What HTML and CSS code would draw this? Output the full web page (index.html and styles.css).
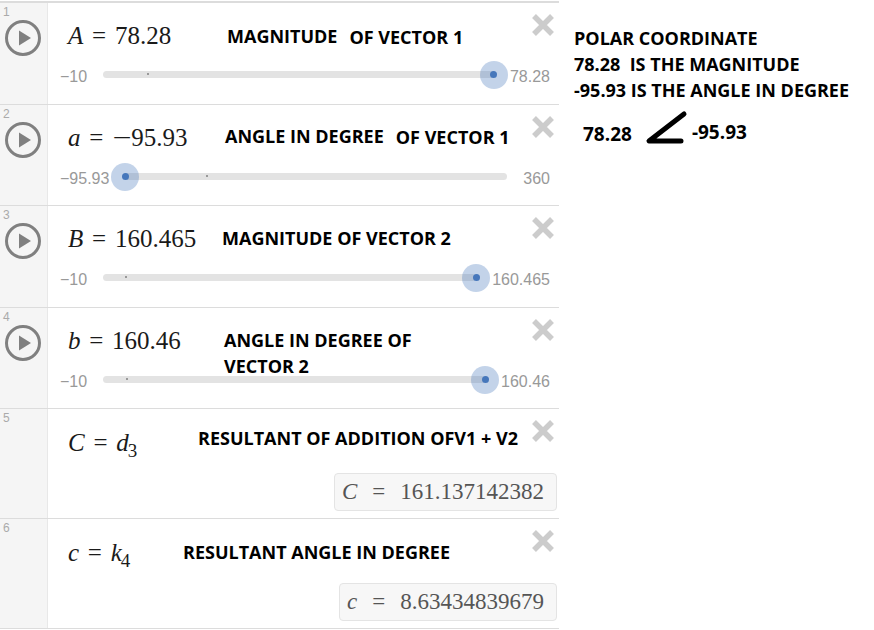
FILE: index.html
```html
<!DOCTYPE html>
<html lang="en">
<head>
  <meta charset="UTF-8">
  <title>Polar coordinates</title>
  <link rel="stylesheet" href="styles.css">
</head>
<body>
  <div class="lista">
    <div class="fila alta1">
      <div class="margen">
        <span class="num">1</span>
        <svg class="play" width="36" height="36" viewBox="0 0 36 36"><circle cx="18" cy="18" r="16.5"/><path d="M14 10.500 L26 18 L14 25.500 Z"/></svg>
      </div>
      <div class="cuerpo">
        <div class="cabeza">
          <div class="mate"><i>A</i> = 78.28</div>
          <div class="nota nota1"><span>MAGNITUDE</span><span class="baja">OF VECTOR 1</span></div>
        </div>
        <div class="slider">
          <span>−10</span>
          <div class="pista"><b class="marca" style="left: 11.3%"></b><b class="thumb fin"></b></div>
          <span>78.28</span>
        </div>
      </div>
      <span class="cerrar"><svg width="24" height="24" viewBox="0 0 24 24"><path d="M3 3 L21 21 M21 3 L3 21"/></svg></span>
    </div>

    <div class="fila alta2">
      <div class="margen">
        <span class="num">2</span>
        <svg class="play" width="36" height="36" viewBox="0 0 36 36"><circle cx="18" cy="18" r="16.5"/><path d="M14 10.500 L26 18 L14 25.500 Z"/></svg>
      </div>
      <div class="cuerpo">
        <div class="cabeza">
          <div class="mate"><i>a</i> = <span class="menos">−</span>95.93</div>
          <div class="nota nota2"><span>ANGLE IN DEGREE</span><span class="baja">OF VECTOR 1</span></div>
        </div>
        <div class="slider">
          <span>−95.93</span>
          <div class="pista"><b class="marca" style="left: 21%"></b><b class="thumb"></b></div>
          <span>360</span>
        </div>
      </div>
      <span class="cerrar"><svg width="24" height="24" viewBox="0 0 24 24"><path d="M3 3 L21 21 M21 3 L3 21"/></svg></span>
    </div>

    <div class="fila alta1">
      <div class="margen">
        <span class="num">3</span>
        <svg class="play" width="36" height="36" viewBox="0 0 36 36"><circle cx="18" cy="18" r="16.5"/><path d="M14 10.500 L26 18 L14 25.500 Z"/></svg>
      </div>
      <div class="cuerpo">
        <div class="cabeza">
          <div class="mate"><i>B</i> = 160.465</div>
          <div class="nota nota3">MAGNITUDE OF VECTOR 2</div>
        </div>
        <div class="slider">
          <span>−10</span>
          <div class="pista"><b class="marca" style="left: 5.9%"></b><b class="thumb fin"></b></div>
          <span>160.465</span>
        </div>
      </div>
      <span class="cerrar"><svg width="24" height="24" viewBox="0 0 24 24"><path d="M3 3 L21 21 M21 3 L3 21"/></svg></span>
    </div>

    <div class="fila alta2">
      <div class="margen">
        <span class="num">4</span>
        <svg class="play" width="36" height="36" viewBox="0 0 36 36"><circle cx="18" cy="18" r="16.5"/><path d="M14 10.500 L26 18 L14 25.500 Z"/></svg>
      </div>
      <div class="cuerpo">
        <div class="cabeza">
          <div class="mate"><i>b</i> = 160.46</div>
          <div class="nota nota4">ANGLE IN DEGREE OF<br>VECTOR 2</div>
        </div>
        <div class="slider">
          <span>−10</span>
          <div class="pista"><b class="marca" style="left: 5.9%"></b><b class="thumb fin"></b></div>
          <span>160.46</span>
        </div>
      </div>
      <span class="cerrar"><svg width="24" height="24" viewBox="0 0 24 24"><path d="M3 3 L21 21 M21 3 L3 21"/></svg></span>
    </div>

    <div class="fila alta3">
      <div class="margen">
        <span class="num">5</span>
      </div>
      <div class="cuerpo">
        <div class="cabeza">
          <div class="mate"><i>C</i> = <i>d</i><sub>3</sub></div>
          <div class="nota nota5">RESULTANT OF ADDITION OFV1 + V2</div>
        </div>
        <div class="salida"><i>C</i><span>=</span><span>161.137142382</span></div>
      </div>
      <span class="cerrar"><svg width="24" height="24" viewBox="0 0 24 24"><path d="M3 3 L21 21 M21 3 L3 21"/></svg></span>
    </div>

    <div class="fila alta3">
      <div class="margen">
        <span class="num">6</span>
      </div>
      <div class="cuerpo">
        <div class="cabeza">
          <div class="mate"><i>c</i> = <i>k</i><sub>4</sub></div>
          <div class="nota nota6">RESULTANT ANGLE IN DEGREE</div>
        </div>
        <div class="salida"><i>c</i><span>=</span><span>8.63434839679</span></div>
      </div>
      <span class="cerrar"><svg width="24" height="24" viewBox="0 0 24 24"><path d="M3 3 L21 21 M21 3 L3 21"/></svg></span>
    </div>
  </div>

  <div class="lado">
    <div>POLAR COORDINATE</div>
    <div>78.28&nbsp; IS THE MAGNITUDE</div>
    <div>-95.93 IS THE ANGLE IN DEGREE</div>
    <div class="polar">
      <span>78.28</span>
      <svg width="44" height="36" viewBox="0 0 44 36"><path d="M39 5 L4 32 L36 32"/></svg>
      <span class="polar-ang">-95.93</span>
    </div>
  </div>
</body>
</html>
```

FILE: styles.css
```css
body {
  margin: 0;
  background: #fff;
  display: flex;
  align-items: flex-start;
  font-family: "Liberation Sans", sans-serif;
}

.lista {
  width: 559px;
  flex: none;
  margin-top: 1px;
  border-top: 2px solid #dcdcdc;
}

.fila {
  position: relative;
  display: flex;
  box-sizing: border-box;
  border-bottom: 1px solid #dcdcdc;
}

.alta1 { height: 102px; }
.alta2 { height: 101px; }
.alta3 { height: 110px; }

.margen {
  width: 48px;
  flex: none;
  box-sizing: border-box;
  border-right: 1px solid #e8e8e8;
  background: #f5f5f5;
  padding: 2px 0 0 3px;
}

.num {
  display: block;
  height: 14px;
  font-size: 12px;
  line-height: 14px;
  color: #aaa;
}

.play {
  display: block;
  margin: 1px 0 0 2px;
}

.play circle {
  fill: none;
  stroke: #808080;
  stroke-width: 3;
}

.play path {
  fill: #808080;
}

.cuerpo {
  flex: 1;
  min-width: 0;
  padding: 0 9px 0 12px;
}

.cabeza {
  display: flex;
  height: 61px;
  box-sizing: border-box;
  padding: 18px 0 0 8px;
}

.alta3 .cabeza {
  padding-top: 19px;
}

.mate {
  width: 114px;
  flex: none;
  font-family: "Liberation Serif", serif;
  font-size: 25px;
  word-spacing: 2.500px;
  line-height: 30px;
  color: #1a1a1a;
  white-space: nowrap;
}

.menos {
  display: inline-block;
  margin: 0 2.500px;
  transform: scaleX(1.35);
}

.mate sub {
  margin-left: -1px;
  font-size: 19px;
  line-height: 0;
}

.nota {
  display: flex;
  gap: 12px;
  font-family: "Open Sans", sans-serif;
  font-weight: 700;
  font-size: 18px;
  line-height: 26px;
  color: #000;
  white-space: nowrap;
  margin-top: 2px;
}

.baja { padding-top: 1px; }

.nota1 { margin-left: 45px; margin-top: 2px; }
.nota2 { margin-left: 43px; margin-top: 0; }
.nota3 { margin-left: 40px; margin-top: 1px; }
.nota4 { margin-left: 42px; display: block; margin-top: 1px; }
.nota5 { margin-left: 16px; margin-top: -3px; }
.nota6 { margin-left: 1px; margin-top: 1px; }

.slider {
  display: flex;
  align-items: center;
  gap: 16px;
  height: 24px;
  font-size: 16px;
  color: #999;
}

.slider span {
  padding-top: 2px;
}

.pista {
  position: relative;
  flex: 1;
  height: 7px;
  margin-bottom: 3px;
  border-radius: 4px;
  background: #e3e3e3;
}

.marca {
  position: absolute;
  top: 2px;
  width: 2px;
  height: 2px;
  background: #999;
}

.thumb {
  position: absolute;
  top: 50%;
  left: 0;
  width: 28px;
  height: 28px;
  margin: -14px 0 0 -14px;
  border-radius: 50%;
  background: rgba(72, 122, 188, 0.33);
}

.thumb.fin { left: 100%; }

.thumb::after {
  content: "";
  position: absolute;
  left: 10.500px;
  top: 10.500px;
  width: 7px;
  height: 7px;
  border-radius: 50%;
  background: #4677bb;
}

.salida {
  display: flex;
  justify-content: flex-end;
  gap: 15px;
  box-sizing: border-box;
  width: max-content;
  height: 38px;
  margin: 3px -7px 0 auto;
  padding: 0 12px 0 7px;
  border: 1px solid #e4e4e4;
  border-radius: 4px;
  background: #f7f7f7;
  font-family: "Liberation Serif", serif;
  font-size: 23px;
  line-height: 35px;
  color: #555;
  white-space: nowrap;
}

.cerrar {
  position: absolute;
  top: 10px;
  right: 4px;
  line-height: 0;
}

.cerrar path {
  fill: none;
  stroke: #ccc;
  stroke-width: 5.500;
}

.lado {
  margin: 25px 0 0 15px;
  font-family: "Open Sans", sans-serif;
  font-weight: 700;
  font-size: 18px;
  line-height: 26px;
  color: #000;
  white-space: nowrap;
}

.polar {
  display: flex;
  align-items: flex-start;
  margin: 6px 0 0 9px;
  font-size: 19px;
}

.polar span {
  padding-top: 12px;
}

.polar svg {
  margin-left: 13px;
}

.polar path {
  fill: none;
  stroke: #000;
  stroke-width: 5;
  stroke-linecap: round;
  stroke-linejoin: round;
}

.polar .polar-ang {
  margin-left: 3px;
  padding-top: 10px;
}
```
